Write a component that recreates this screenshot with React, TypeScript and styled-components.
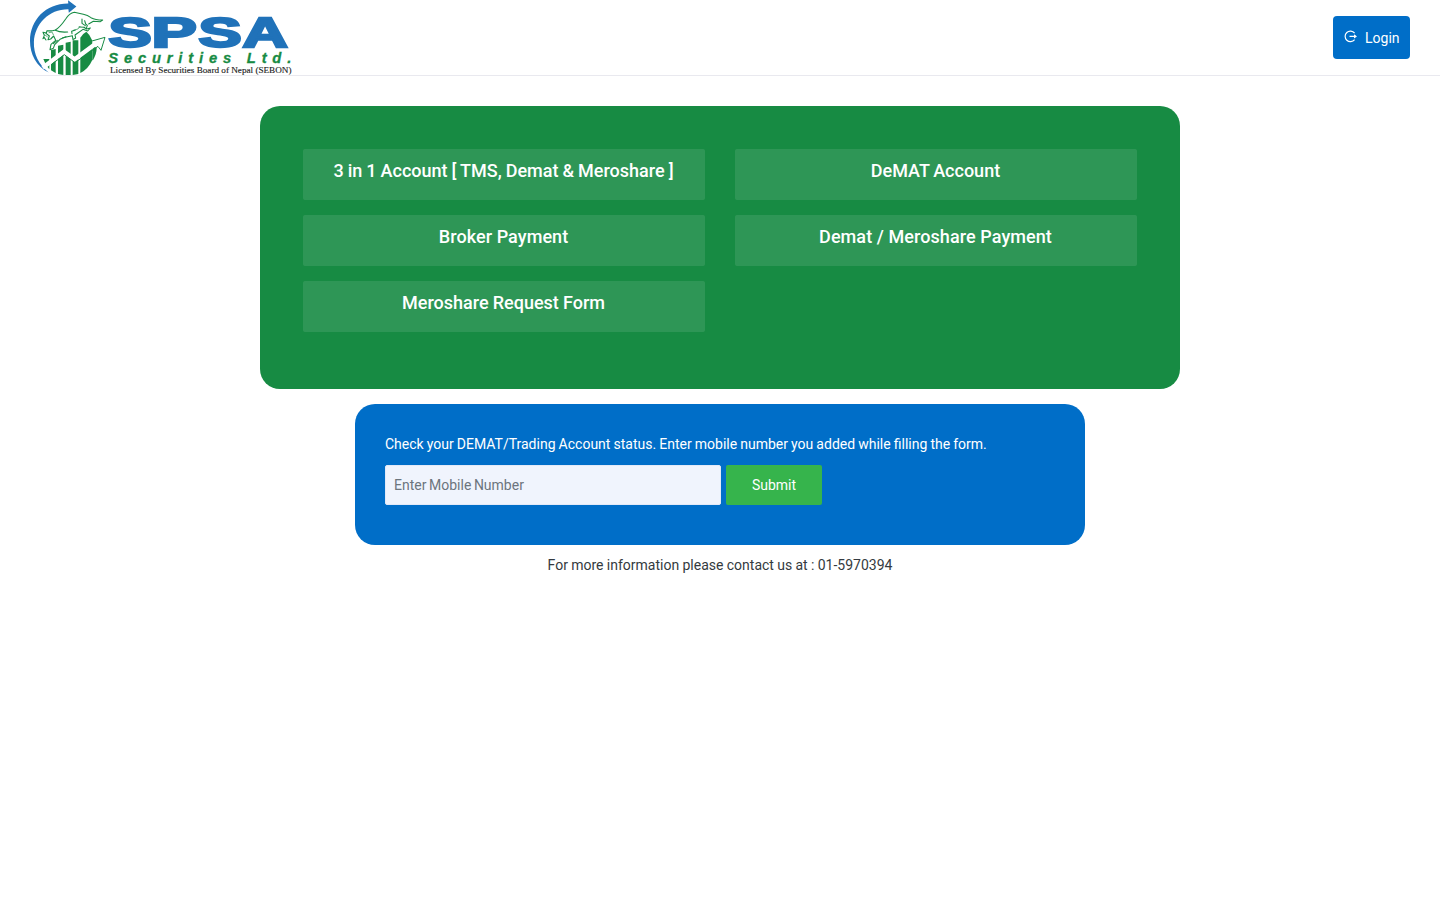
import React from "react";
import styled, { createGlobalStyle } from "styled-components";

const GlobalStyle = createGlobalStyle`
  *, *::before, *::after { box-sizing: border-box; }
  body {
    margin: 0;
    background: #fff;
    color: #343a40;
    font: 400 14px/21px Roboto, sans-serif;
  }
`;

const Header = styled.header`
  display: flex;
  justify-content: space-between;
  align-items: center;
  height: 76px;
  padding: 0 30px 1px;
  border-bottom: 1px solid #e9e9ef;
`;

const LogoSvg = styled.svg`
  display: block;
  width: 263px;
  height: 75px;
  overflow: hidden;
`;

const LoginButton = styled.a`
  display: flex;
  align-items: center;
  gap: 8px;
  width: 77px;
  height: 43px;
  padding: 2px 10px 0 11px;
  border-radius: 4px;
  background: #006ec8;
  color: #fff;
  text-decoration: none;
  svg { flex: none; margin-top: -4px; }
`;

const Main = styled.main`
  display: flex;
  flex-direction: column;
  align-items: center;
  padding-top: 30px;
`;

const Services = styled.section`
  display: grid;
  grid-template-columns: 402px 402px;
  grid-auto-rows: 51px;
  gap: 15px 30px;
  width: 920px;
  height: 283px;
  padding: 43px;
  border-radius: 20px;
  background: #178b43;
`;

const ServiceLink = styled.a<{ $tracking: number; $wordGap: number }>`
  padding: 11px 1px 0 0;
  border-radius: 2px;
  background: rgba(255, 255, 255, 0.1);
  color: #fff;
  font-size: 18px;
  font-weight: 500;
  line-height: 22px;
  letter-spacing: ${(p) => p.$tracking}px;
  word-spacing: ${(p) => p.$wordGap}px;
  text-align: center;
  text-decoration: none;
`;

const StatusPanel = styled.section`
  width: 730px;
  height: 141px;
  margin-top: 15px;
  padding: 30px;
  border-radius: 20px;
  background: #006ec8;
  color: #fff;
`;

const StatusText = styled.p`
  margin: 0 0 10px;
  word-spacing: -0.38px;
`;

const StatusForm = styled.form`
  display: flex;
  gap: 5px;
`;

const MobileInput = styled.input`
  width: 336px;
  height: 40px;
  padding: 0 8px;
  border: 1px solid #e2e9f8;
  border-radius: 2px;
  background: #f0f4fd;
  color: #495057;
  font: inherit;
  &::placeholder { color: #6c757d; opacity: 1; word-spacing: -0.9px; }
`;

const SubmitButton = styled.button`
  width: 96px;
  height: 40px;
  padding: 0;
  border: 0;
  border-radius: 2px;
  background: #36b44c;
  color: #fff;
  font: inherit;
`;

const Contact = styled.p`
  margin: 10px 0 0;
  word-spacing: -0.15px;
`;

const services = [
  { name: "3 in 1 Account [ TMS, Demat & Meroshare ]", tracking: 0, wordGap: -0.45 },
  { name: "DeMAT Account", tracking: 0, wordGap: -0.8 },
  { name: "Broker Payment", tracking: 0.07, wordGap: 0 },
  { name: "Demat / Meroshare Payment", tracking: 0.08, wordGap: 0 },
  { name: "Meroshare Request Form", tracking: 0, wordGap: -0.3 },
];

const letters = [
  { char: "S", x: 108.5, width: 43.2 },
  { char: "P", x: 151.6, width: 45.3 },
  { char: "S", x: 198.6, width: 43.2 },
  { char: "A", x: 242.4, width: 45.3 },
];

function Logo() {
  return (
    <LogoSvg viewBox="30 0 263 75" role="img" aria-label="SPSA Securities Ltd.">
      {/* ring and arrow head */}
      <path fill="#2072b9" d="M68 0.3 76.4 6.6 68.8 12.8 68.4 9.2C49 9 34.6 24 33.9 42C33.4 54 39 65 48.7 72.4C36 66.5 30 54 30 41C30 20 46 3.4 68.3 3.6Z" />
      <g transform="translate(24 0) scale(.33333)">
        {/* bars */}
        <g fill="#178b43">
          <path d="M58 177H76V208Q65 196 58 177Z" />
          <path d="M81 150 95 147V219L81 211Z" />
          <path d="M102 137 118 134V225L102 222Z" />
          <path d="M125 128 140 125V225H125Z" />
          <path d="M146 121H163V222L146 225Z" />
          <path d="M169 113Q174 102 187 95Q199 105 204 120L206 140V178Q193 208 169 219Z" />
          <path d="M206 135 218 145Q218 163 206 182Z" />
        </g>
        {/* rising trend arrow */}
        <path d="M56 203 120 155 152 178 222 126" fill="none" stroke="#fff" strokeWidth="13" />
        <path d="M204 123 243 112 231 151 222 139 153 188 121 164 83 193" fill="none" stroke="#178b43" strokeWidth="3" />
        <path d="M208 127 239 116 229 144Z" fill="#fff" />
        {/* bull */}
        <path fill="#fff" d="M65 119 57 103 69 92 90 91 111 76 134 40 153 37 197 50 208 64 187 89 165 100 145 112 112 110 96 125Z" />
        <g fill="none" stroke="#178b43" strokeWidth="3.2" strokeLinecap="round" strokeLinejoin="round">
          <path d="M66 120 61 113 57 116 61 106 57 97 67 99 69 92Q82 94 94 90Q108 82 125 57Q136 40 151 37L178 43Q191 46 201 53Q214 60 236 60L229 65 208 64 194 72" />
          <path d="M94 91Q108 98 131 96M66 100 76 108 72 119 80 117 89 108 95 121 81 133 78 149 88 145 92 134 108 118 126 110" />
          <path d="M100 121 88 131M116 113 145 107 147 119 155 114 153 105 177 88 191 93 199 84 188 87 179 82M182 62 185 72 190 76 187 85M174 57 174 70 184 77M165 81 182 82M154 90 143 94 144 101" />
          <path strokeWidth="2" d="M75 98 84 96 88 104M63 105 70 110M148 91 162 87 168 79" />
        </g>
      </g>
      <g fill="#2072b9" stroke="#2072b9" strokeWidth="2.4" fontFamily="Liberation Sans, sans-serif" fontWeight="700" fontSize="42">
        {letters.map((l) => (
          <text key={l.x} x={l.x} y="46.8" textLength={l.width} lengthAdjust="spacingAndGlyphs">{l.char}</text>
        ))}
      </g>
      <text x="108.3" y="63.2" fill="#178b43" stroke="#178b43" strokeWidth=".3" fontFamily="Liberation Sans, sans-serif" fontWeight="700" fontStyle="italic" fontSize="14.8" textLength="183" lengthAdjust="spacing">Securities Ltd.</text>
      <text x="110" y="73" fill="#222" stroke="#222" strokeWidth=".12" fontFamily="Liberation Serif, serif" fontSize="7.6" textLength="181.5" lengthAdjust="spacingAndGlyphs">Licensed By Securities Board of Nepal (SEBON)</text>
    </LogoSvg>
  );
}

export default function App() {
  return (
    <>
      <GlobalStyle />
      <Header>
        <Logo />
        <LoginButton>
          <svg width="13" height="13" viewBox="0 0 13 13" fill="none" stroke="#fff" strokeWidth="1.2">
            <path d="M10.6 3.1A5.3 5.3 0 1 0 10.6 9.6M5.5 6.4H12" />
            <path d="M10 4.2 13 6.4 10 8.6Z" fill="#fff" stroke="none" />
          </svg>
          Login
        </LoginButton>
      </Header>
      <Main>
        <Services>
          {services.map((s) => (
            <ServiceLink key={s.name} $tracking={s.tracking} $wordGap={s.wordGap}>{s.name}</ServiceLink>
          ))}
        </Services>
        <StatusPanel>
          <StatusText>Check your DEMAT/Trading Account status. Enter mobile number you added while filling the form.</StatusText>
          <StatusForm>
            <MobileInput placeholder="Enter Mobile Number" />
            <SubmitButton type="button">Submit</SubmitButton>
          </StatusForm>
        </StatusPanel>
        <Contact>For more information please contact us at : 01-5970394</Contact>
      </Main>
    </>
  );
}
